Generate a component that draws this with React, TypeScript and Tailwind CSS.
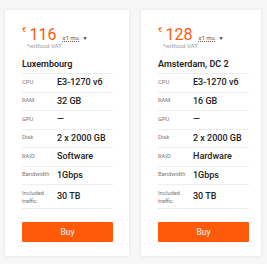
import React from "react";

type Plan = {
  price: string;
  city: string;
  specs: [string, string][];
  width: string;
};

const plans: Plan[] = [
  {
    price: "116",
    city: "Luxembourg",
    width: "w-[124px]",
    specs: [
      ["CPU", "E3-1270 v6"],
      ["RAM", "32 GB"],
      ["GPU", "—"],
      ["Disk", "2 x 2000 GB"],
      ["RAID", "Software"],
      ["Bandwidth", "1Gbps"],
    ],
  },
  {
    price: "128",
    city: "Amsterdam, DC 2",
    width: "w-[120px]",
    specs: [
      ["CPU", "E3-1270 v6"],
      ["RAM", "16 GB"],
      ["GPU", "—"],
      ["Disk", "2 x 2000 GB"],
      ["RAID", "Hardware"],
      ["Bandwidth", "1Gbps"],
    ],
  },
];

function Card({ plan }: { plan: Plan }) {
  return (
    <div
      className={`${plan.width} h-[246px] bg-white shadow-[0_0_4px_rgba(0,0,0,0.09)] pl-[17px] pt-[17px] flex flex-col`}
    >
      <div className="w-[91px] flex flex-col">
        <div className="flex items-baseline h-[15px]">
          <span className="self-start text-[8px] leading-none text-[#ff5a0a] -mt-[1px] mr-[3px]">€</span>
          <span className="text-[16px] leading-[15px] text-[#ff5a0a]">{plan.price}</span>
          <span className="ml-[6px] text-[6px] leading-[6px] text-[#555] underline decoration-dotted">x1 mo.</span>
          <span className="ml-[2px] text-[5px] leading-[5px] text-[#333]">▼</span>
        </div>
        <div className="ml-[5px] mt-[1px] text-[6px] leading-[6px] text-[#9a9a9a]">*without VAT</div>
        <div className="mt-[11px] pb-[4px] border-b border-[#ececec] text-[9px] leading-[9px] font-semibold text-[#222]">
          {plan.city}
        </div>
        {plan.specs.map(([k, v]) => (
          <div key={k} className="h-[18.5px] border-b border-[#ececec] flex items-center">
            <span className="w-[35px] text-[5.8px] leading-none text-[#777]">{k}</span>
            <span className="text-[9px] leading-none font-medium text-[#222]">{v}</span>
          </div>
        ))}
        <div className="h-[24px] border-b border-[#ececec] flex items-center">
          <span className="w-[35px] text-[5.8px] leading-[8px] text-[#777]">
            Included
            <br />
            traffic
          </span>
          <span className="text-[9px] leading-none font-medium text-[#222]">30 TB</span>
        </div>
        <button className="mt-[13px] h-[20px] w-full bg-[#ff5a0a] rounded-[1px] text-white text-[8.5px] leading-none">
          Buy
        </button>
      </div>
    </div>
  );
}

export default function App() {
  return (
    <div
      className="w-[267px] h-[264px] bg-[#f7f7f7] flex gap-[12px] pl-[5px] pt-[10px]"
      style={{ fontFamily: "Roboto, 'Liberation Sans', sans-serif" }}
    >
      {plans.map((p) => (
        <Card key={p.city} plan={p} />
      ))}
    </div>
  );
}
